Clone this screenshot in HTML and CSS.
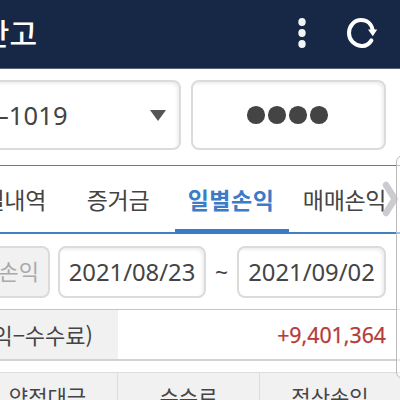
FILE: index.html
```
<!DOCTYPE html>
<html lang="ko">
<head>
<meta charset="utf-8">
<title>잔고</title>
<link rel="stylesheet" href="styles.css">
</head>
<body>
<div class="screen">
  <header class="topbar">
    <h1 class="title"><span>잔고</span></h1>
    <svg class="more" viewBox="0 0 10 32"><ellipse cx="5" cy="5" rx="3.7" ry="4"/><ellipse cx="5" cy="16" rx="3.7" ry="4"/><ellipse cx="5" cy="27" rx="3.7" ry="4"/></svg>
    <svg class="refresh" viewBox="0 0 32 32"><path class="ring" d="M25.4 22.4C23 26.4 19.4 28.3 15.4 28C8.3 27.4 3 22 3 15C3 7.9 8.3 2 15 2C21 2 25.6 6 26.6 12"/><path class="tip" d="M22 11.6H31.2L26.8 18.2Z"/></svg>
  </header>
  <section class="account">
    <div class="field select"><span class="number">–1019</span><i class="arrow"></i></div>
    <div class="field pin"><i></i><i></i><i></i><i></i></div>
  </section>
  <nav class="tabs">
    <div class="tab first"><span>체결내역</span></div>
    <div class="tab"><span>증거금</span></div>
    <div class="tab active"><span>일별손익</span></div>
    <div class="tab last"><span>매매손익</span></div>
  </nav>
  <section class="period">
    <div class="field kind"><span>손익</span></div>
    <div class="field date start"><span>2021/08/23</span></div>
    <span class="tilde">~</span>
    <div class="field date end"><span>2021/09/02</span></div>
  </section>
  <section class="summary">
    <div class="label"><span>익−수수료)</span></div>
    <div class="value"><span>+9,401,364</span></div>
  </section>
  <section class="columns">
    <div class="amount"><span>약정대금</span></div>
    <div><span>수수료</span></div>
    <div><span>정산손익</span></div>
  </section>
  <svg class="next" viewBox="0 0 18 36"><path d="M4 4L12.8 18L4 32"/></svg>
  <div class="edge"></div>
</div>
</body>
</html>
```
FILE: styles.css
```
* { box-sizing: border-box; }
body { margin: 0; }
.screen {
  position: relative;
  width: 400px;
  height: 400px;
  overflow: hidden;
  background: #fff;
  color: #444;
  font-family: "Noto Sans", "Noto Sans CJK KR", sans-serif;
}
span { white-space: nowrap; flex: none; }
.topbar {
  display: flex;
  align-items: center;
  height: 69px;
  padding-right: 23px;
  background: #172746;
  border-bottom: 1px solid #586378;
}
.title {
  display: flex;
  justify-content: flex-end;
  width: 37px;
  margin: 0 auto 0 0;
  padding-bottom: 4px;
  color: #fff;
  font: 500 30px/40px "Noto Sans CJK KR", sans-serif;
}
.more { width: 10px; height: 32px; margin: 0 39px 2px 0; fill: #f3f4f6; }
.refresh { width: 32px; height: 32px; margin-right: -1px; }
.ring { fill: none; stroke: #fff; stroke-width: 4; stroke-linecap: round; }
.tip { fill: #fff; }
.account {
  display: flex;
  gap: 10px;
  height: 96px;
  padding: 11px 14px 15px 0;
}
.field {
  display: flex;
  align-items: center;
  border: 2px solid #dbdbdb;
  border-radius: 8px;
  background: #fff;
  box-shadow: inset -2px 2px 3px #eee;
}
.select {
  width: 181px;
  justify-content: space-between;
  padding-right: 13px;
  border-left: 0;
  border-radius: 0 8px 8px 0;
}
.number { margin-left: -4px; font-size: 25.5px; line-height: 36px; letter-spacing: .1px; }
.arrow {
  border: 8px solid transparent;
  border-top: 11px solid #555;
  border-bottom: 0;
}
.pin { width: 195px; justify-content: center; gap: 3.4px; padding-right: 2px; }
.pin i { width: 17.7px; height: 17.7px; border-radius: 50%; background: #444; }
.tabs {
  display: flex;
  height: 69px;
  border-top: 1px solid #777;
  border-bottom: 2px solid #4280c4;
  font: 23px/34px "Noto Sans CJK KR", sans-serif;
}
.tab {
  display: flex;
  justify-content: center;
  width: 114px;
  height: 68px;
  padding-top: 16px;
  letter-spacing: -.3px;
}
.first { width: 61px; justify-content: flex-end; padding-right: 15px; }
.active { padding-right: 2px; border-bottom: 5px solid #3c7bc6; color: #3c7bc6; font-weight: 700; letter-spacing: .5px; }
.last { width: 111px; }
.period {
  display: flex;
  align-items: center;
  height: 75px;
  padding: 0 14px 0 0;
}
.kind {
  width: 50px;
  height: 52px;
  justify-content: flex-end;
  padding: 0 9px 3px 0;
  border-left: 0;
  border-radius: 0 8px 8px 0;
  background: #f1f1f1;
  box-shadow: none;
  color: #aaa;
  font: 22px/32px "Noto Sans CJK KR", sans-serif;
}
.date { height: 52px; justify-content: center; font-size: 23.8px; line-height: 34px; }
.start { width: 148px; margin-left: 8px; }
.end { width: 149px; }
.tilde { width: 31px; text-align: center; font-size: 23px; line-height: 34px; }
.summary {
  display: flex;
  height: 52px;
  border-top: 1px solid #c4c4c4;
  border-bottom: 2px solid #d2d2d2;
}
.label, .value { display: flex; align-items: center; justify-content: flex-end; }
.label {
  width: 118px;
  padding: 0 25px 2px 0;
  background: #f1f1f1;
  font: 22px/32px "Noto Sans CJK KR", sans-serif;
}
.value { width: 282px; padding-right: 14px; color: #b63c38; font-size: 21.3px; line-height: 32px; -webkit-text-stroke: .25px #b63c38; }
.columns {
  display: grid;
  grid-template-columns: 118px 142px 140px;
  height: 40px;
  margin-top: 11px;
  background: #f1f1f1;
  border-top: 1px solid #ddd;
  font: 21px/32px "Noto Sans CJK KR", sans-serif;
}
.columns div { display: flex; justify-content: center; padding-top: 7px; border-right: 1px solid #ddd; }
.columns .amount { padding-right: 22px; }
.columns div:last-child { border: 0; }
.next { position: absolute; left: 382px; top: 181px; width: 18px; height: 36px; fill: none; stroke: #c3c3c8; stroke-width: 6.5; stroke-linecap: round; opacity: .85; }
.edge {
  position: absolute;
  left: 396px;
  top: 155px;
  width: 14px;
  height: 224px;
  border: 1px solid #bbb;
  border-radius: 8px;
  background: rgba(255, 255, 255, .5);
}
```
